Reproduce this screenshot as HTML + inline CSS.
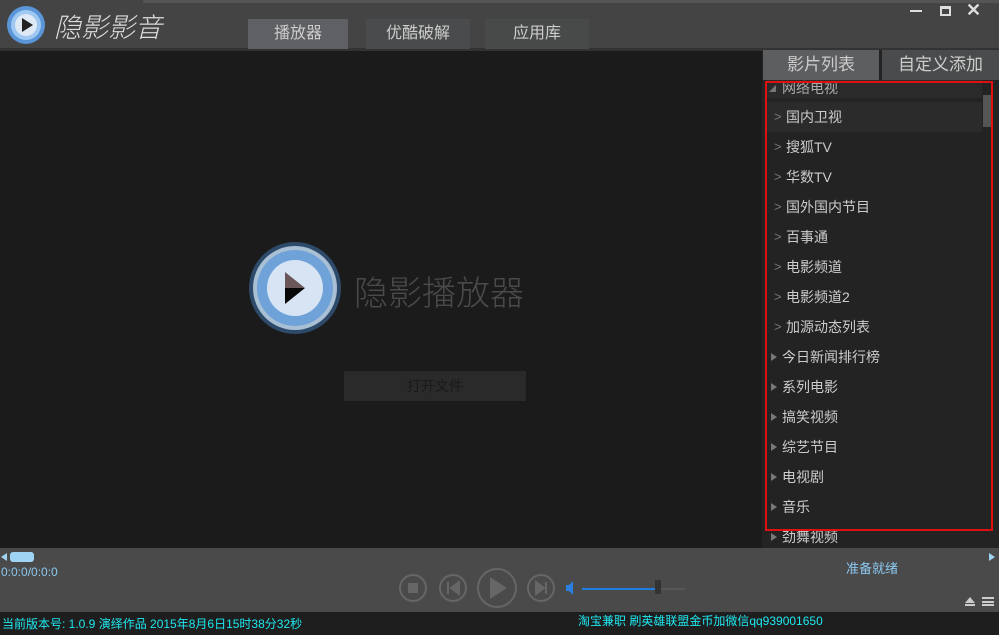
<!DOCTYPE html><html><head><meta charset="utf-8"><style>
*{margin:0;padding:0;box-sizing:border-box}
body{width:999px;height:635px;overflow:hidden;background:#1b1b1b;font-family:"Liberation Sans","Noto Sans CJK SC",sans-serif;position:relative}
.a{position:absolute}
.tab{position:absolute;top:19px;height:30px;color:#ccc;font-size:16px;text-align:center;line-height:30px}
.it{position:absolute;left:766px;width:216px;height:30px;color:#ccc;font-size:14px;line-height:30px}
.it .c{position:absolute;left:8px;color:#777;font-size:13px}
.it .t{position:absolute;left:20px}
.it .tr{position:absolute;left:5px;top:11px;width:0;height:0;border-left:6px solid #777;border-top:4px solid transparent;border-bottom:4px solid transparent}
.it .t2{position:absolute;left:16px}
</style></head><body>
<div class="a" style="left:0;top:0;width:999px;height:50px;background:#444"></div>
<div class="a" style="left:143px;top:0;width:856px;height:3px;background:#555"></div>
<div class="a" style="left:0;top:48px;width:999px;height:3px;background:#333"></div>
<svg class="a" style="left:6px;top:5px" width="40" height="40"><circle cx="20" cy="20" r="19" fill="#5a95d8"/><circle cx="20" cy="20" r="15" fill="#9ec8f2"/><circle cx="20" cy="20" r="11" fill="#dfe9f5"/><path d="M16 13 L27 20 L16 27Z" fill="#222"/></svg>
<div class="a" style="left:54px;top:6px;color:#ddd;font-size:27px;font-style:italic;font-weight:300">隐影影音</div>
<div class="tab" style="left:248px;width:100px;background:#5f6063">播放器</div>
<div class="tab" style="left:366px;width:104px;background:#4a4b4c">优酷破解</div>
<div class="tab" style="left:485px;width:104px;background:#484949">应用库</div>
<div class="a" style="left:910px;top:10px;width:12px;height:2px;background:#ddd"></div>
<div class="a" style="left:940px;top:6px;width:11px;height:10px;border:2px solid #ddd;border-top-width:3px"></div>
<div class="a" style="left:966px;top:0px;color:#ddd;font-size:18px;font-weight:bold">✕</div>
<svg class="a" style="left:248px;top:240px" width="96" height="96"><circle cx="47" cy="48" r="46" fill="#2e4a6a"/><circle cx="47" cy="48" r="42" fill="#a9bfd4"/><circle cx="47" cy="48" r="38" fill="#6fa2d8"/><circle cx="47" cy="48" r="28" fill="#d6e4f3"/><path d="M37 32 L57 48 L37 48Z" fill="#6a575a"/><path d="M37 48 L57 48 L37 64Z" fill="#080808"/></svg>
<div class="a" style="left:354px;top:266px;color:#4a4a4a;font-size:34px;font-weight:200">隐影播放器</div>
<div class="a" style="left:343px;top:370px;width:184px;height:32px;background:#2a2a2a;border:1px solid #1a1a1a;color:#1a1a1a;text-align:center;line-height:30px;font-size:14px">打开文件</div>
<div class="a" style="left:762px;top:50px;width:237px;height:498px;background:#232323"></div>
<div class="a" style="left:763px;top:50px;width:116px;height:30px;background:#5d5e60;color:#ccc;font-size:17px;text-align:center;line-height:30px">影片列表</div>
<div class="a" style="left:882px;top:50px;width:117px;height:30px;background:#4a4b4c;color:#ccc;font-size:17px;text-align:center;line-height:30px">自定义添加</div>
<div class="a" style="left:766px;top:80px;width:216px;height:18px;background:#2a2a2a;color:#aaa;font-size:14px;line-height:16px;padding-left:16px">网络电视</div>
<div class="a" style="left:769px;top:85px;width:0;height:0;border-bottom:7px solid #777;border-left:7px solid transparent"></div>
<div class="a" style="left:766px;top:102px;width:216px;height:30px;background:#2b2b2b"></div>
<div class="it" style="top:102px"><span class="c">&gt;</span><span class="t">国内卫视</span></div>
<div class="it" style="top:132px"><span class="c">&gt;</span><span class="t">搜狐TV</span></div>
<div class="it" style="top:162px"><span class="c">&gt;</span><span class="t">华数TV</span></div>
<div class="it" style="top:192px"><span class="c">&gt;</span><span class="t">国外国内节目</span></div>
<div class="it" style="top:222px"><span class="c">&gt;</span><span class="t">百事通</span></div>
<div class="it" style="top:252px"><span class="c">&gt;</span><span class="t">电影频道</span></div>
<div class="it" style="top:282px"><span class="c">&gt;</span><span class="t">电影频道2</span></div>
<div class="it" style="top:312px"><span class="c">&gt;</span><span class="t">加源动态列表</span></div>
<div class="it" style="top:342px"><span class="tr"></span><span class="t2">今日新闻排行榜</span></div>
<div class="it" style="top:372px"><span class="tr"></span><span class="t2">系列电影</span></div>
<div class="it" style="top:402px"><span class="tr"></span><span class="t2">搞笑视频</span></div>
<div class="it" style="top:432px"><span class="tr"></span><span class="t2">综艺节目</span></div>
<div class="it" style="top:462px"><span class="tr"></span><span class="t2">电视剧</span></div>
<div class="it" style="top:492px"><span class="tr"></span><span class="t2">音乐</span></div>
<div class="it" style="top:522px"><span class="tr"></span><span class="t2">劲舞视频</span></div>
<div class="a" style="left:983px;top:95px;width:10px;height:32px;background:#555"></div>
<div class="a" style="left:765px;top:81px;width:228px;height:450px;border:2px solid #e01010"></div>
<div class="a" style="left:0;top:548px;width:999px;height:64px;background:#4a4a4a"></div>
<div class="a" style="left:10px;top:552px;width:24px;height:10px;border-radius:3px;background:#9fd4f4"></div>
<div class="a" style="left:1px;top:553px;width:0;height:0;border-right:6px solid #9fd4f4;border-top:4px solid transparent;border-bottom:4px solid transparent"></div>
<div class="a" style="left:989px;top:553px;width:0;height:0;border-left:6px solid #9fd4f4;border-top:4px solid transparent;border-bottom:4px solid transparent"></div>
<div class="a" style="left:1px;top:565px;color:#8cc8f0;font-size:12px">0:0:0/0:0:0</div>
<div class="a" style="left:846px;top:558px;color:#8cc8f0;font-size:13px">准备就绪</div>
<svg class="a" style="left:395px;top:568px" width="300" height="40"><g fill="none" stroke="#666" stroke-width="2"><circle cx="18" cy="20" r="13"/><circle cx="58" cy="20" r="13"/><circle cx="102" cy="20" r="19"/><circle cx="146" cy="20" r="13"/></g><rect x="13" y="15" width="10" height="10" fill="#666"/><path d="M53 14v12M64 14l-8 6 8 6z" stroke="#666" fill="#666" stroke-width="2"/><path d="M95 9 L112 20 L95 31Z" fill="#666"/><path d="M151 14v12M141 14l8 6-8 6z" stroke="#666" fill="#666" stroke-width="2"/><path d="M171 17h3l4-4v14l-4-4h-3z" fill="#2a7fe0"/><line x1="187" y1="21" x2="262" y2="21" stroke="#1e7ee0" stroke-width="2"/><line x1="262" y1="21" x2="290" y2="21" stroke="#666" stroke-width="1"/><rect x="260" y="12" width="6" height="14" fill="#333"/></svg>
<div class="a" style="left:965px;top:597px;width:0;height:0;border-bottom:6px solid #ccc;border-left:5px solid transparent;border-right:5px solid transparent"></div>
<div class="a" style="left:965px;top:604px;width:10px;height:2px;background:#ccc"></div>
<div class="a" style="left:982px;top:597px;width:12px;height:9px;border-top:2px solid #ccc;border-bottom:2px solid #ccc"></div>
<div class="a" style="left:982px;top:601px;width:12px;height:2px;background:#ccc"></div>
<div class="a" style="left:0;top:612px;width:999px;height:23px;background:#1e1e1e"></div>
<div class="a" style="left:2px;top:615px;color:#1ee8f0;font-size:12px">当前版本号: 1.0.9 演绎作品 2015年8月6日15时38分32秒</div>
<div class="a" style="left:578px;top:612px;color:#1ee8f0;font-size:12px">淘宝兼职 刷英雄联盟金币加微信qq939001650</div>
</body></html>
